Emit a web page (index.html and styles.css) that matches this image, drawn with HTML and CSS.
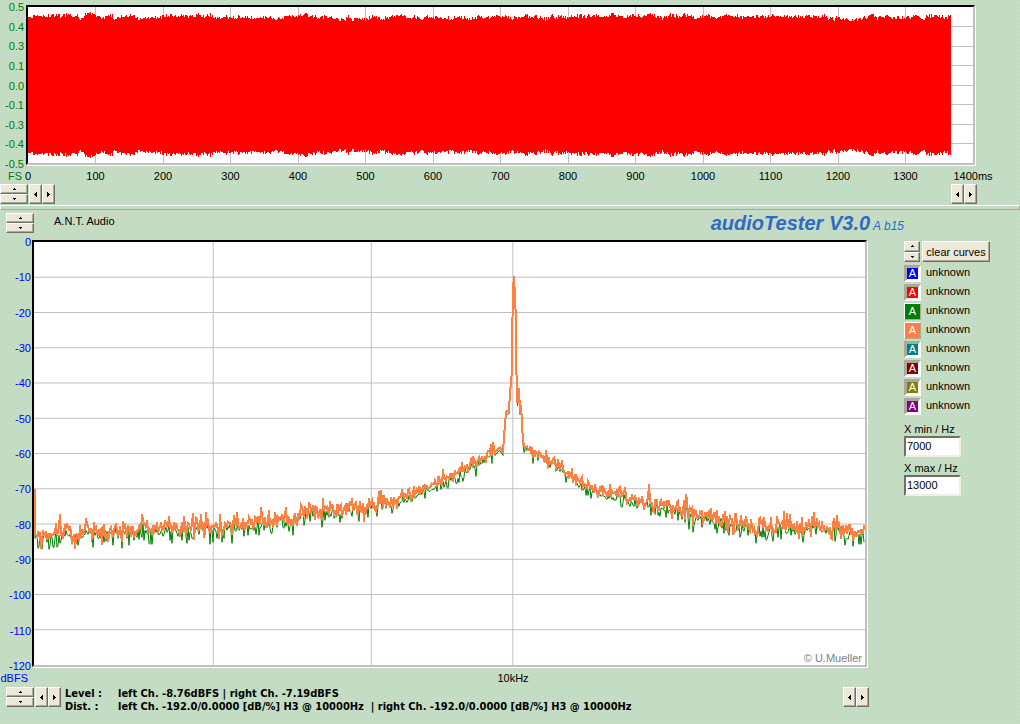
FILE: index.html
```
<!DOCTYPE html>
<html lang="en">
<head>
    <meta charset="UTF-8">
    <meta name="viewport" content="width=device-width, initial-scale=1.0">
    <title>audioTester V3.0</title>
    <link rel="stylesheet" href="styles.css">
</head>
<body>
    <!-- Oscilloscope -->
    <section class="scope">
        <div class="scope-axis-y">
            <span>0.5</span><span>0.4</span><span>0.3</span><span>0.1</span><span>0.0</span><span>-0.1</span><span>-0.3</span><span>-0.4</span><span>-0.5</span>
        </div>
        <div class="plot scope-plot">
            <svg id="scope" viewBox="0 0 945 156" preserveAspectRatio="none">
                <path class="grid-line" id="scopeGrid"/>
                <path class="wave" id="wave"/>
            </svg>
        </div>
        <span class="scope-unit">FS</span>
        <div class="scope-axis-x">
            <span>0</span><span>100</span><span>200</span><span>300</span><span>400</span><span>500</span><span>600</span><span>700</span><span>800</span><span>900</span><span>1000</span><span>1100</span><span>1200</span><span>1300</span><span>1400ms</span>
        </div>
    </section>
    <div class="scope-controls">
        <div class="spin wide">
            <button aria-label="Amplitude up"><svg viewBox="0 0 3 2"><path d="M1 0h1v1h1v1H0V1h1z"/></svg></button>
            <button aria-label="Amplitude down"><svg viewBox="0 0 3 2"><path d="M0 0h3v1H2v1H1V1H0z"/></svg></button>
        </div>
        <div class="steps">
            <button aria-label="Shorter"><svg viewBox="0 0 3 5"><path d="M3 0v5H2V4H1V3H0V2h1V1h1V0z"/></svg></button>
            <button aria-label="Longer"><svg viewBox="0 0 3 5"><path d="M0 0h1v1h1v1h1v1H2v1H1v1H0z"/></svg></button>
        </div>
        <div class="steps end">
            <button aria-label="Scroll left"><svg viewBox="0 0 3 5"><path d="M3 0v5H2V4H1V3H0V2h1V1h1V0z"/></svg></button>
            <button aria-label="Scroll right"><svg viewBox="0 0 3 5"><path d="M0 0h1v1h1v1h1v1H2v1H1v1H0z"/></svg></button>
        </div>
    </div>
    <div class="splitter"></div>

    <!-- Spectrum -->
    <main class="analyser">
        <header class="top-bar">
            <div class="spin wide">
                <button aria-label="Top level up"><svg viewBox="0 0 3 2"><path d="M1 0h1v1h1v1H0V1h1z"/></svg></button>
                <button aria-label="Top level down"><svg viewBox="0 0 3 2"><path d="M0 0h3v1H2v1H1V1H0z"/></svg></button>
            </div>
            <span class="company">A.N.T. Audio</span>
            <h1>audioTester V3.0<small>A b15</small></h1>
        </header>
        <div class="spectrum">
            <div class="spectrum-axis-y">
                <span>0</span><span>-10</span><span>-20</span><span>-30</span><span>-40</span><span>-50</span><span>-60</span><span>-70</span><span>-80</span><span>-90</span><span>-100</span><span>-110</span><span>-120</span>
            </div>
            <div class="plot spectrum-plot">
                <svg id="spectrum" viewBox="0 0 831 424" preserveAspectRatio="none">
                    <path class="grid-line" id="spectrumGrid"/>
                    <path class="curve left" id="leftCurve"/>
                    <path class="curve right" id="rightCurve"/>
                </svg>
                <span class="credit">© U.Mueller</span>
            </div>
            <span class="spectrum-unit">dBFS</span>
            <div class="spectrum-axis-x"><span>10kHz</span></div>
        </div>
        <aside class="side">
            <div class="clear-row">
                <div class="spin narrow">
                    <button aria-label="Next curve"><svg viewBox="0 0 3 2"><path d="M1 0h1v1h1v1H0V1h1z"/></svg></button>
                    <button aria-label="Previous curve"><svg viewBox="0 0 3 2"><path d="M0 0h3v1H2v1H1V1H0z"/></svg></button>
                </div>
                <button class="clear">clear curves</button>
            </div>
            <ul class="curves">
                <li><button class="swatch blue">A</button>unknown</li>
                <li><button class="swatch red">A</button>unknown</li>
                <li><button class="swatch green active">A</button>unknown</li>
                <li><button class="swatch orange active">A</button>unknown</li>
                <li><button class="swatch teal">A</button>unknown</li>
                <li><button class="swatch maroon">A</button>unknown</li>
                <li><button class="swatch olive">A</button>unknown</li>
                <li><button class="swatch purple">A</button>unknown</li>
            </ul>
            <label for="xMin">X min / Hz</label>
            <input type="text" id="xMin" value="7000">
            <label for="xMax">X max / Hz</label>
            <input type="text" id="xMax" value="13000">
        </aside>
    </main>

    <footer class="status">
        <div class="spin wide">
            <button aria-label="Range up"><svg viewBox="0 0 3 2"><path d="M1 0h1v1h1v1H0V1h1z"/></svg></button>
            <button aria-label="Range down"><svg viewBox="0 0 3 2"><path d="M0 0h3v1H2v1H1V1H0z"/></svg></button>
        </div>
        <div class="steps">
            <button aria-label="Narrower"><svg viewBox="0 0 3 5"><path d="M3 0v5H2V4H1V3H0V2h1V1h1V0z"/></svg></button>
            <button aria-label="Wider"><svg viewBox="0 0 3 5"><path d="M0 0h1v1h1v1h1v1H2v1H1v1H0z"/></svg></button>
        </div>
        <dl class="readout">
            <dt>Level :</dt>
            <dd>left Ch. -8.76dBFS | right Ch. -7.19dBFS</dd>
            <dt>Dist. :</dt>
            <dd>left Ch. -192.0/0.0000 [dB/%] H3 @ 10000Hz&nbsp; | right Ch. -192.0/0.0000 [dB/%] H3 @ 10000Hz</dd>
        </dl>
        <div class="steps end">
            <button aria-label="Scroll left"><svg viewBox="0 0 3 5"><path d="M3 0v5H2V4H1V3H0V2h1V1h1V0z"/></svg></button>
            <button aria-label="Scroll right"><svg viewBox="0 0 3 5"><path d="M0 0h1v1h1v1h1v1H2v1H1v1H0z"/></svg></button>
        </div>
    </footer>

    <script src="plots.js"></script>
</body>
</html>
```

FILE: styles.css
```
* {
    box-sizing: border-box;
}
body {
    margin: 0;
    min-height: 100vh;
    display: flex;
    flex-direction: column;
    font: 11px/12px "Liberation Sans", Arial, sans-serif;
    color: #000;
    background: #c3dec3 url("data:image/svg+xml,%3Csvg xmlns='http://www.w3.org/2000/svg' width='8' height='8'%3E%3Cpath fill='%23c6c0c8' d='M1 0h1v1H1zM5 2h1v1H5zM2 5h1v1H2zM6 6h1v1H6z'/%3E%3C/svg%3E");
}
button {
    font: inherit;
    padding: 0;
    color: #000;
    display: flex;
    align-items: center;
    justify-content: center;
    background: #ece9d8;
    border: 1px solid;
    border-color: #fff #716f64 #716f64 #fff;
    box-shadow: inset -1px -1px #aca899;
}
button svg {
    display: block;
}

/* Plots */
.plot {
    position: relative;
    margin-bottom: 1px;
    background: #fff;
    border: 2px solid;
    border-color: #000 #c0c0c0 #c0c0c0 #000;
    box-shadow: 1px 1px #fff;
}
.plot svg {
    position: absolute;
    inset: 0;
    width: 100%;
    height: 100%;
}
.plot path {
    vector-effect: non-scaling-stroke;
}
.grid-line {
    fill: none;
    stroke: #c0c0c0;
    shape-rendering: crispEdges;
}
.wave {
    fill: #f00;
    shape-rendering: crispEdges;
}
.curve {
    fill: none;
    shape-rendering: crispEdges;
}
.curve.left {
    stroke: #008000;
    stroke-width: 1px;
}
.curve.right {
    stroke: #ff8040;
    stroke-width: 2px;
}

/* Oscilloscope */
.scope {
    display: grid;
    grid-template-columns: 26px 1fr;
    padding: 5px 45px 0 0;
}
.scope-plot {
    height: 160px;
}
.scope-axis-y {
    display: flex;
    flex-direction: column;
    justify-content: space-between;
    margin: -4px 2px -4px 0;
    text-align: right;
    color: #008000;
}
.scope-unit {
    padding: 4px 4px 0 0;
    text-align: right;
    color: #008000;
}
.scope-axis-x {
    display: flex;
    justify-content: space-between;
    padding: 4px 2px 0;
}
.scope-axis-x span,
.spectrum-axis-x span {
    width: 0;
    display: flex;
    justify-content: center;
    white-space: nowrap;
}
.scope-controls {
    display: flex;
    padding: 2px 43px 0 0;
}
.splitter {
    height: 5px;
    margin-top: 1px;
    border: 1px solid;
    border-color: #fff #aca899 #aca899 #fff;
}

/* Spin buttons */
.spin {
    display: flex;
    flex-direction: column;
}
.spin button {
    flex: 1;
}
.spin svg {
    width: 3px;
    height: 2px;
}
.wide {
    width: 28px;
    height: 20px;
}
.narrow {
    width: 16px;
    height: 21px;
}
.steps {
    display: flex;
    margin-left: 1px;
    height: 20px;
}
.steps button {
    width: 13px;
}
.steps svg {
    width: 3px;
    height: 5px;
}
.end {
    margin-left: auto;
}

/* Spectrum */
.analyser {
    flex: 1;
    display: grid;
    grid-template-columns: 1fr 116px;
    grid-template-rows: 27px 1fr;
    padding-top: 3px;
}
.top-bar {
    grid-column: 1 / 3;
    display: flex;
    align-items: flex-start;
    padding: 0 116px 0 6px;
}
.company {
    margin: 2px 0 0 20px;
}
h1 {
    margin: 0 0 0 auto;
    font: italic bold 20px/20px "Liberation Sans", Arial, sans-serif;
    color: #316ac5;
}
h1 small {
    margin-left: 3px;
    font-size: 12px;
    font-weight: normal;
}
.spectrum {
    display: grid;
    grid-template-columns: 32px 1fr;
    grid-template-rows: 1fr 18px;
    padding-right: 37px;
}
.spectrum-plot {
    min-height: 200px;
}
.spectrum-axis-y {
    display: flex;
    flex-direction: column;
    justify-content: space-between;
    margin: -4px 1px -4px 0;
    text-align: right;
    color: #00f;
}
.spectrum-unit {
    padding: 4px 4px 0 0;
    text-align: right;
    color: #00f;
}
.spectrum-axis-x {
    display: grid;
    grid-template-columns: 479fr 352fr;
    padding: 4px 2px 0;
}
.spectrum-axis-x span {
    grid-column: 2;
}
.credit {
    position: absolute;
    right: 3px;
    bottom: 1px;
    color: #808080;
}

/* Curve list */
.side {
    padding-top: 1px;
}
.clear-row {
    display: flex;
    gap: 2px;
}
.clear {
    width: 68px;
    height: 21px;
}
.curves {
    list-style: none;
    margin: 3px 0 6px;
    padding: 0;
}
.curves li {
    display: flex;
    gap: 5px;
    height: 19px;
    line-height: 15px;
}
.swatch {
    width: 17px;
    height: 17px;
    color: #fff;
    border: 2px solid;
    border-color: #aca899 #fff #fff #aca899;
    box-shadow: inset 1px 1px #aca899, inset -1px -1px #fff;
}
.swatch.active {
    border-width: 1px;
    border-color: #fff #aca899 #aca899 #fff;
    box-shadow: none;
}
.blue { background: #00f; }
.red { background: #f00; }
.green { background: #008000; }
.orange { background: #ff8040; }
.teal { background: #008080; }
.maroon { background: #800000; }
.olive { background: #808000; }
.purple { background: #800080; }
.side label {
    display: block;
    margin-bottom: 1px;
}
.side input {
    display: block;
    width: 57px;
    height: 21px;
    margin-bottom: 5px;
    padding: 0 1px 2px;
    font: inherit;
    background: #fff;
    border: 2px solid;
    border-color: #716f64 #f1efe2 #f1efe2 #716f64;
}

/* Status line */
.status {
    display: flex;
    padding: 1px 151px 11px 6px;
}
.readout {
    display: grid;
    grid-template-columns: 53px auto;
    margin: 0 0 0 4px;
    font: bold 11px/13px "DejaVu Sans Condensed", Tahoma, sans-serif;
    white-space: nowrap;
}
.readout dd {
    margin: 0;
}
```

FILE: plots.js
```
// Repeatable noise in the range -1..1
let seed = 4711;
function noise() {
    seed = (seed * 16807) % 2147483647;
    return seed / 1073741823.5 - 1;
}

function setPath(id, d) {
    document.getElementById(id).setAttribute('d', d);
}

// Oscilloscope: 100ms and 1/8 scale grid, 1367ms of signal
let grid = '';
for (let i = 1; i < 14; i++) {
    grid += `M${i * 67.5} 0V156`;
}
for (let i = 1; i < 8; i++) {
    grid += `M0 ${i * 19.5}H945`;
}
setPath('scopeGrid', grid);

let upper = '';
let lower = '';
let swell = 0;
for (let x = 0; x < 923; x++) {
    swell = swell * 0.88 + noise() * 1.1;
    const height = 68 + swell + noise() * 1.8 + (x > 55 && x < 85 ? 2 : 0);
    upper += `L${x} ${Math.round(78 - height)}H${x + 1}`;
    lower = `L${x + 1} ${Math.round(78 + height)}H${x}` + lower;
}
setPath('wave', 'M0 78' + upper + lower + 'Z');

// Spectrum: log scale from 7kHz to 13kHz, 0 to -120dB
grid = '';
for (const khz of [8, 9, 10]) {
    grid += `M${831 * Math.log(khz / 7) / Math.log(13 / 7)} 0V424`;
}
for (let i = 1; i < 12; i++) {
    grid += `M0 ${i * 424 / 12}H831`;
}
setPath('spectrumGrid', grid);

const floor = [
    [3, 294], [20, 292], [60, 290], [110, 288], [180, 285], [220, 281], [262, 277],
    [268, 267], [300, 270], [337, 262], [366, 257], [396, 245], [416, 235], [436, 225],
    [450, 216], [458, 208]
];
const peak = [
    [459, 201], [461, 211], [464, 207], [466, 206], [469, 211], [470, 195], [472, 170],
    [475, 169], [476, 151], [477.5, 135], [479, 46], [480, 34], [482, 78], [482.5, 133],
    [483.5, 161], [485, 146], [486, 170], [487, 163], [489, 200]
];
const slope = [
    [490, 203], [508, 213], [526, 226], [546, 240], [566, 250], [596, 257], [620, 262],
    [650, 269], [680, 277], [720, 284], [770, 285], [800, 286], [830, 289]
];
const spikes = { 26: -11, 41: 14, 159: -9, 211: 10, 227: -11, 263: 12, 615: -11, 683: -9, 782: -9 };

function level(points, x) {
    let i = 1;
    while (i < points.length - 1 && points[i][0] < x) {
        i++;
    }
    const [x0, y0] = points[i - 1];
    const [x1, y1] = points[i];
    return y0 + (y1 - y0) * (x - x0) / (x1 - x0);
}

let left = 'M1 285V297';
let right = 'M1 248V292';
function drawFloor(points, from, to) {
    for (let x = from; x <= to; x++) {
        const near = Math.abs(x - 480) < 110 ? 0.7 : 1;
        const n = noise() * noise() * 14 * near;
        const y = level(points, x) + n + noise() * 4 * near + (spikes[x] || 0);
        right += `L${x} ${Math.round(y)}`;
        const dip = noise();
        left += `L${x} ${Math.round(level(points, x) + 4 + n * 0.5 + dip * 5 * near + (dip > 0.7 ? 5 * near : 0))}`;
    }
}
drawFloor(floor, 3, 458);
for (const [x, y] of peak) {
    right += `L${x} ${y}`;
    left += `L${x} ${y + 3}`;
}
drawFloor(slope, 490, 830);
setPath('leftCurve', left);
setPath('rightCurve', right);
```
